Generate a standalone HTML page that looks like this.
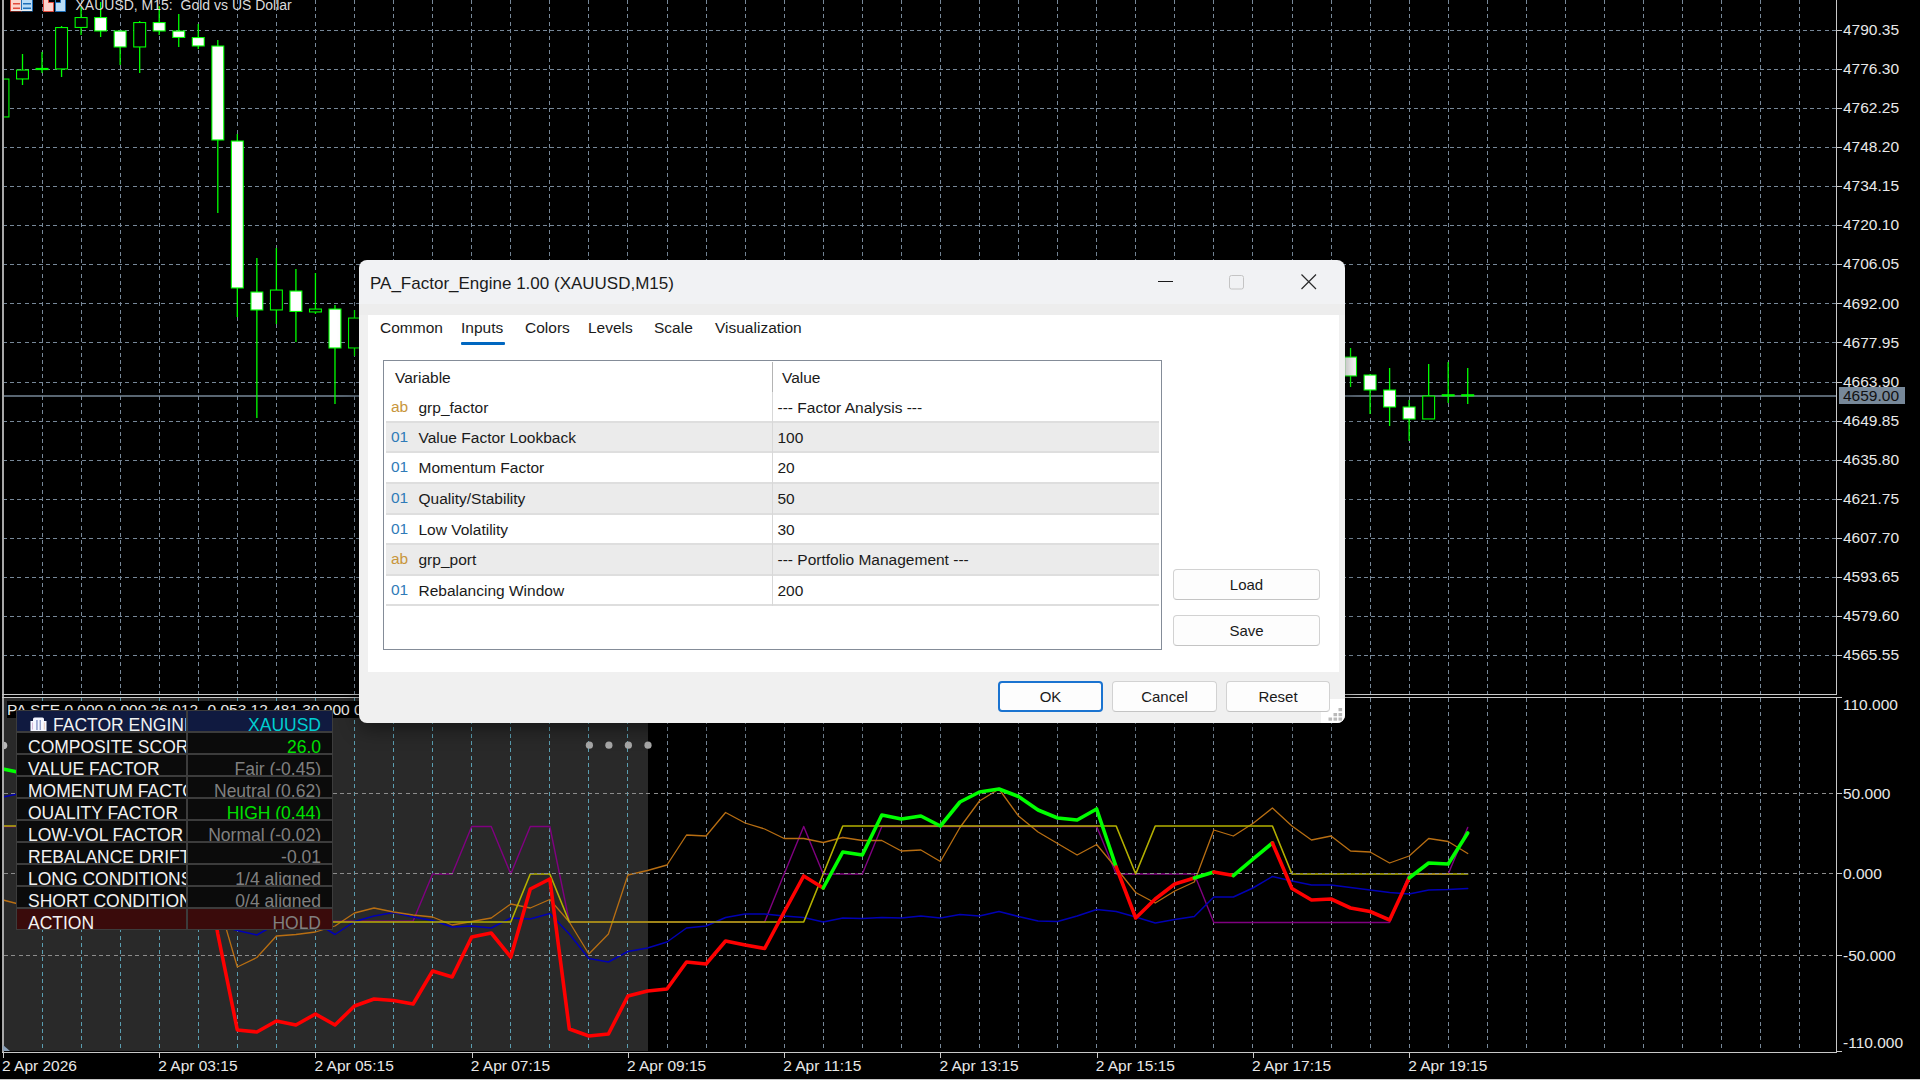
<!DOCTYPE html><html><head><meta charset="utf-8"><style>
*{margin:0;padding:0;box-sizing:border-box}
html,body{width:1920px;height:1080px;overflow:hidden;background:#000}
body{position:relative;font-family:"Liberation Sans",sans-serif}
.ax{position:absolute;color:#e8e8e8;font-size:15.5px;line-height:18px;white-space:nowrap}
.cell{position:absolute;height:22px;border:1px solid #3c3c3c;overflow:hidden}
.lab{position:absolute;top:3.8px;color:#f2f2f2;font-size:17.5px;line-height:20px;white-space:nowrap}
.val{position:absolute;right:11px;top:3.8px;font-size:17.5px;line-height:20px;white-space:nowrap}
#dlg{position:absolute;left:359px;top:260px;width:986px;height:463px;background:#f0f0f0;border-radius:8px;box-shadow:0 6px 20px rgba(0,0,0,0.45);overflow:hidden}
#dlg .title{position:absolute;left:11px;top:14px;font-size:17px;color:#1b1b1b;white-space:nowrap}
#dlg{background:linear-gradient(#f1f2f4 0,#f1f2f4 44px,#ededed 44px,#ededed 55px,#f0f0f0 55px)}
.client{position:absolute;left:9px;top:55px;width:971px;height:357px;background:#fff}
.tab{position:absolute;top:4px;font-size:15.5px;color:#1a1a1a;white-space:nowrap}
.tbl{position:absolute;left:15px;top:45px;width:779px;height:290px;border:1px solid #848c98;background:#fff;overflow:hidden}
.hdr{position:absolute;top:8px;font-size:15.5px;color:#1a1a1a}
.row{position:absolute;left:2px;width:773px;height:30.5px;border-top:2px solid #dedede}
.row.last{border-bottom:2px solid #dedede;height:32px}
.row .ic{position:absolute;left:5px;top:5px;font-size:15.5px}
.row .nm{position:absolute;left:32.5px;top:6px;font-size:15.5px;color:#1a1a1a;white-space:nowrap}
.row .vl{position:absolute;left:391.5px;top:6px;font-size:15.5px;color:#1a1a1a;white-space:nowrap}
.btn{position:absolute;width:146px;height:31px;border:1px solid #d2d2d2;border-bottom-color:#c4c4c4;border-radius:4px;background:#fdfdfd;font-size:15px;color:#1a1a1a;text-align:center;line-height:29px}
#dlg>.btn{width:104px;z-index:2}
.btn.ok{border:2px solid #1a73d0;line-height:27px}
</style></head><body>
<svg width="1920" height="1080" viewBox="0 0 1920 1080" style="position:absolute;left:0;top:0">
<rect x="0" y="0" width="1920" height="1080" fill="#000"/>
<rect x="4" y="698" width="644" height="353" fill="#292929"/>
<g stroke="#778899" stroke-width="1" stroke-dasharray="4 3.2" shape-rendering="crispEdges">
<line x1="42.5" y1="0" x2="42.5" y2="694"/>
<line x1="81.5" y1="0" x2="81.5" y2="694"/>
<line x1="120.5" y1="0" x2="120.5" y2="694"/>
<line x1="159.5" y1="0" x2="159.5" y2="694"/>
<line x1="198.5" y1="0" x2="198.5" y2="694"/>
<line x1="237.5" y1="0" x2="237.5" y2="694"/>
<line x1="276.5" y1="0" x2="276.5" y2="694"/>
<line x1="315.5" y1="0" x2="315.5" y2="694"/>
<line x1="354.5" y1="0" x2="354.5" y2="694"/>
<line x1="393.5" y1="0" x2="393.5" y2="694"/>
<line x1="432.5" y1="0" x2="432.5" y2="694"/>
<line x1="471.5" y1="0" x2="471.5" y2="694"/>
<line x1="510.5" y1="0" x2="510.5" y2="694"/>
<line x1="549.5" y1="0" x2="549.5" y2="694"/>
<line x1="588.5" y1="0" x2="588.5" y2="694"/>
<line x1="627.5" y1="0" x2="627.5" y2="694"/>
<line x1="667.5" y1="0" x2="667.5" y2="694"/>
<line x1="706.5" y1="0" x2="706.5" y2="694"/>
<line x1="745.5" y1="0" x2="745.5" y2="694"/>
<line x1="784.5" y1="0" x2="784.5" y2="694"/>
<line x1="823.5" y1="0" x2="823.5" y2="694"/>
<line x1="862.5" y1="0" x2="862.5" y2="694"/>
<line x1="901.5" y1="0" x2="901.5" y2="694"/>
<line x1="940.5" y1="0" x2="940.5" y2="694"/>
<line x1="979.5" y1="0" x2="979.5" y2="694"/>
<line x1="1018.5" y1="0" x2="1018.5" y2="694"/>
<line x1="1057.5" y1="0" x2="1057.5" y2="694"/>
<line x1="1096.5" y1="0" x2="1096.5" y2="694"/>
<line x1="1135.5" y1="0" x2="1135.5" y2="694"/>
<line x1="1174.5" y1="0" x2="1174.5" y2="694"/>
<line x1="1213.5" y1="0" x2="1213.5" y2="694"/>
<line x1="1252.5" y1="0" x2="1252.5" y2="694"/>
<line x1="1292.5" y1="0" x2="1292.5" y2="694"/>
<line x1="1331.5" y1="0" x2="1331.5" y2="694"/>
<line x1="1370.5" y1="0" x2="1370.5" y2="694"/>
<line x1="1409.5" y1="0" x2="1409.5" y2="694"/>
<line x1="1448.5" y1="0" x2="1448.5" y2="694"/>
<line x1="1487.5" y1="0" x2="1487.5" y2="694"/>
<line x1="1526.5" y1="0" x2="1526.5" y2="694"/>
<line x1="1565.5" y1="0" x2="1565.5" y2="694"/>
<line x1="1604.5" y1="0" x2="1604.5" y2="694"/>
<line x1="1643.5" y1="0" x2="1643.5" y2="694"/>
<line x1="1682.5" y1="0" x2="1682.5" y2="694"/>
<line x1="1721.5" y1="0" x2="1721.5" y2="694"/>
<line x1="1760.5" y1="0" x2="1760.5" y2="694"/>
<line x1="1799.5" y1="0" x2="1799.5" y2="694"/>
<line x1="3" y1="30.5" x2="1836" y2="30.5"/>
<line x1="3" y1="69.5" x2="1836" y2="69.5"/>
<line x1="3" y1="108.5" x2="1836" y2="108.5"/>
<line x1="3" y1="147.5" x2="1836" y2="147.5"/>
<line x1="3" y1="186.5" x2="1836" y2="186.5"/>
<line x1="3" y1="225.5" x2="1836" y2="225.5"/>
<line x1="3" y1="264.5" x2="1836" y2="264.5"/>
<line x1="3" y1="303.5" x2="1836" y2="303.5"/>
<line x1="3" y1="342.5" x2="1836" y2="342.5"/>
<line x1="3" y1="382.5" x2="1836" y2="382.5"/>
<line x1="3" y1="421.5" x2="1836" y2="421.5"/>
<line x1="3" y1="460.5" x2="1836" y2="460.5"/>
<line x1="3" y1="499.5" x2="1836" y2="499.5"/>
<line x1="3" y1="538.5" x2="1836" y2="538.5"/>
<line x1="3" y1="577.5" x2="1836" y2="577.5"/>
<line x1="3" y1="616.5" x2="1836" y2="616.5"/>
<line x1="3" y1="655.5" x2="1836" y2="655.5"/>
</g>
<g stroke-width="1" stroke-dasharray="4 3.2" shape-rendering="crispEdges">
<line x1="42.5" y1="698" x2="42.5" y2="1051" stroke="#5a9db0"/>
<line x1="81.5" y1="698" x2="81.5" y2="1051" stroke="#5a9db0"/>
<line x1="120.5" y1="698" x2="120.5" y2="1051" stroke="#5a9db0"/>
<line x1="159.5" y1="698" x2="159.5" y2="1051" stroke="#5a9db0"/>
<line x1="198.5" y1="698" x2="198.5" y2="1051" stroke="#5a9db0"/>
<line x1="237.5" y1="698" x2="237.5" y2="1051" stroke="#5a9db0"/>
<line x1="276.5" y1="698" x2="276.5" y2="1051" stroke="#5a9db0"/>
<line x1="315.5" y1="698" x2="315.5" y2="1051" stroke="#5a9db0"/>
<line x1="354.5" y1="698" x2="354.5" y2="1051" stroke="#5a9db0"/>
<line x1="393.5" y1="698" x2="393.5" y2="1051" stroke="#5a9db0"/>
<line x1="432.5" y1="698" x2="432.5" y2="1051" stroke="#5a9db0"/>
<line x1="471.5" y1="698" x2="471.5" y2="1051" stroke="#5a9db0"/>
<line x1="510.5" y1="698" x2="510.5" y2="1051" stroke="#5a9db0"/>
<line x1="549.5" y1="698" x2="549.5" y2="1051" stroke="#5a9db0"/>
<line x1="588.5" y1="698" x2="588.5" y2="1051" stroke="#5a9db0"/>
<line x1="627.5" y1="698" x2="627.5" y2="1051" stroke="#5a9db0"/>
<line x1="667.5" y1="698" x2="667.5" y2="1051" stroke="#778899"/>
<line x1="706.5" y1="698" x2="706.5" y2="1051" stroke="#778899"/>
<line x1="745.5" y1="698" x2="745.5" y2="1051" stroke="#778899"/>
<line x1="784.5" y1="698" x2="784.5" y2="1051" stroke="#778899"/>
<line x1="823.5" y1="698" x2="823.5" y2="1051" stroke="#778899"/>
<line x1="862.5" y1="698" x2="862.5" y2="1051" stroke="#778899"/>
<line x1="901.5" y1="698" x2="901.5" y2="1051" stroke="#778899"/>
<line x1="940.5" y1="698" x2="940.5" y2="1051" stroke="#778899"/>
<line x1="979.5" y1="698" x2="979.5" y2="1051" stroke="#778899"/>
<line x1="1018.5" y1="698" x2="1018.5" y2="1051" stroke="#778899"/>
<line x1="1057.5" y1="698" x2="1057.5" y2="1051" stroke="#778899"/>
<line x1="1096.5" y1="698" x2="1096.5" y2="1051" stroke="#778899"/>
<line x1="1135.5" y1="698" x2="1135.5" y2="1051" stroke="#778899"/>
<line x1="1174.5" y1="698" x2="1174.5" y2="1051" stroke="#778899"/>
<line x1="1213.5" y1="698" x2="1213.5" y2="1051" stroke="#778899"/>
<line x1="1252.5" y1="698" x2="1252.5" y2="1051" stroke="#778899"/>
<line x1="1292.5" y1="698" x2="1292.5" y2="1051" stroke="#778899"/>
<line x1="1331.5" y1="698" x2="1331.5" y2="1051" stroke="#778899"/>
<line x1="1370.5" y1="698" x2="1370.5" y2="1051" stroke="#778899"/>
<line x1="1409.5" y1="698" x2="1409.5" y2="1051" stroke="#778899"/>
<line x1="1448.5" y1="698" x2="1448.5" y2="1051" stroke="#778899"/>
<line x1="1487.5" y1="698" x2="1487.5" y2="1051" stroke="#778899"/>
<line x1="1526.5" y1="698" x2="1526.5" y2="1051" stroke="#778899"/>
<line x1="1565.5" y1="698" x2="1565.5" y2="1051" stroke="#778899"/>
<line x1="1604.5" y1="698" x2="1604.5" y2="1051" stroke="#778899"/>
<line x1="1643.5" y1="698" x2="1643.5" y2="1051" stroke="#778899"/>
<line x1="1682.5" y1="698" x2="1682.5" y2="1051" stroke="#778899"/>
<line x1="1721.5" y1="698" x2="1721.5" y2="1051" stroke="#778899"/>
<line x1="1760.5" y1="698" x2="1760.5" y2="1051" stroke="#778899"/>
<line x1="1799.5" y1="698" x2="1799.5" y2="1051" stroke="#778899"/>
</g>
<line x1="3" y1="396" x2="1836" y2="396" stroke="#778899" stroke-width="1.3"/>
<g>
<rect x="2.32" y="79" width="1.3" height="38" fill="#00ff00"/>
<rect x="-3.53" y="78.5" width="13" height="39" fill="#00ff00"/>
<rect x="-2.43" y="79.6" width="10.8" height="36.8" fill="#000000"/>
<rect x="21.85" y="54" width="1.3" height="31" fill="#00ff00"/>
<rect x="16" y="69.5" width="13" height="10" fill="#00ff00"/>
<rect x="17.1" y="70.6" width="10.8" height="7.8" fill="#000000"/>
<rect x="41.38" y="52" width="1.3" height="21" fill="#00ff00"/>
<rect x="35.53" y="67.9" width="13" height="2.2" fill="#00ff00"/>
<rect x="60.91" y="26" width="1.3" height="51" fill="#00ff00"/>
<rect x="55.06" y="27" width="13" height="42.5" fill="#00ff00"/>
<rect x="56.16" y="28.1" width="10.8" height="40.3" fill="#000000"/>
<rect x="80.44" y="7" width="1.3" height="28" fill="#00ff00"/>
<rect x="74.59" y="17" width="13" height="11" fill="#00ff00"/>
<rect x="75.69" y="18.1" width="10.8" height="8.8" fill="#000000"/>
<rect x="99.97" y="2" width="1.3" height="35" fill="#00ff00"/>
<rect x="94.12" y="17" width="13" height="14.5" fill="#00ff00"/>
<rect x="95.22" y="18.1" width="10.8" height="12.3" fill="#ffffff"/>
<rect x="119.5" y="31" width="1.3" height="34" fill="#00ff00"/>
<rect x="113.65" y="30.5" width="13" height="17" fill="#00ff00"/>
<rect x="114.75" y="31.6" width="10.8" height="14.8" fill="#ffffff"/>
<rect x="139.03" y="21" width="1.3" height="52" fill="#00ff00"/>
<rect x="133.18" y="22" width="13" height="25.5" fill="#00ff00"/>
<rect x="134.28" y="23.1" width="10.8" height="23.3" fill="#000000"/>
<rect x="158.56" y="6" width="1.3" height="29" fill="#00ff00"/>
<rect x="152.71" y="22" width="13" height="9.5" fill="#00ff00"/>
<rect x="153.81" y="23.1" width="10.8" height="7.3" fill="#ffffff"/>
<rect x="178.09" y="14" width="1.3" height="33" fill="#00ff00"/>
<rect x="172.24" y="30.5" width="13" height="7.5" fill="#00ff00"/>
<rect x="173.34" y="31.6" width="10.8" height="5.3" fill="#ffffff"/>
<rect x="197.62" y="24" width="1.3" height="25" fill="#00ff00"/>
<rect x="191.77" y="37" width="13" height="9.5" fill="#00ff00"/>
<rect x="192.87" y="38.1" width="10.8" height="7.3" fill="#ffffff"/>
<rect x="217.15" y="40" width="1.3" height="173" fill="#00ff00"/>
<rect x="211.3" y="45.5" width="13" height="95" fill="#00ff00"/>
<rect x="212.4" y="46.6" width="10.8" height="92.8" fill="#ffffff"/>
<rect x="236.68" y="134" width="1.3" height="183" fill="#00ff00"/>
<rect x="230.83" y="140.5" width="13" height="148" fill="#00ff00"/>
<rect x="231.93" y="141.6" width="10.8" height="145.8" fill="#ffffff"/>
<rect x="256.21" y="258" width="1.3" height="160" fill="#00ff00"/>
<rect x="250.36" y="291.5" width="13" height="19" fill="#00ff00"/>
<rect x="251.46" y="292.6" width="10.8" height="16.8" fill="#ffffff"/>
<rect x="275.74" y="248" width="1.3" height="76" fill="#00ff00"/>
<rect x="269.89" y="289.5" width="13" height="21" fill="#00ff00"/>
<rect x="270.99" y="290.6" width="10.8" height="18.8" fill="#000000"/>
<rect x="295.27" y="269" width="1.3" height="73" fill="#00ff00"/>
<rect x="289.42" y="290.5" width="13" height="21.5" fill="#00ff00"/>
<rect x="290.52" y="291.6" width="10.8" height="19.3" fill="#ffffff"/>
<rect x="314.8" y="273" width="1.3" height="41" fill="#00ff00"/>
<rect x="308.95" y="308.5" width="13" height="4" fill="#00ff00"/>
<rect x="310.05" y="309.6" width="10.8" height="1.8" fill="#000000"/>
<rect x="334.33" y="305" width="1.3" height="99" fill="#00ff00"/>
<rect x="328.48" y="308.5" width="13" height="40" fill="#00ff00"/>
<rect x="329.58" y="309.6" width="10.8" height="37.8" fill="#ffffff"/>
<rect x="353.86" y="310" width="1.3" height="46" fill="#00ff00"/>
<rect x="348.01" y="317.5" width="13" height="31" fill="#00ff00"/>
<rect x="349.11" y="318.6" width="10.8" height="28.8" fill="#000000"/>
<rect x="1349.89" y="348" width="1.3" height="39" fill="#00ff00"/>
<rect x="1344.04" y="356.5" width="13" height="20" fill="#00ff00"/>
<rect x="1345.14" y="357.6" width="10.8" height="17.8" fill="#ffffff"/>
<rect x="1369.42" y="374" width="1.3" height="40" fill="#00ff00"/>
<rect x="1363.57" y="374.5" width="13" height="16" fill="#00ff00"/>
<rect x="1364.67" y="375.6" width="10.8" height="13.8" fill="#ffffff"/>
<rect x="1388.95" y="368" width="1.3" height="58" fill="#00ff00"/>
<rect x="1383.1" y="389.5" width="13" height="18" fill="#00ff00"/>
<rect x="1384.2" y="390.6" width="10.8" height="15.8" fill="#ffffff"/>
<rect x="1408.48" y="400" width="1.3" height="41" fill="#00ff00"/>
<rect x="1402.63" y="406.5" width="13" height="13" fill="#00ff00"/>
<rect x="1403.73" y="407.6" width="10.8" height="10.8" fill="#ffffff"/>
<rect x="1428.01" y="364" width="1.3" height="55" fill="#00ff00"/>
<rect x="1422.16" y="395.5" width="13" height="24" fill="#00ff00"/>
<rect x="1423.26" y="396.6" width="10.8" height="21.8" fill="#000000"/>
<rect x="1447.54" y="362" width="1.3" height="41" fill="#00ff00"/>
<rect x="1441.69" y="394.2" width="13" height="2.2" fill="#00ff00"/>
<rect x="1467.07" y="368" width="1.3" height="36" fill="#00ff00"/>
<rect x="1461.22" y="394.2" width="13" height="2.2" fill="#00ff00"/>
</g>
<g fill="none" stroke-linejoin="round" stroke-linecap="round">
<path d="M2.97 826.5 L120.15 826.5 L139.68 922 L413.1 921 L432.63 874 L452.16 874 L471.69 826.5 L491.22 826.5 L510.75 874 L530.28 826.5 L549.81 826.5 L569.34 922 L764.64 922 L784.17 874 L803.7 826.5 L823.23 874 L842.76 874 L862.29 874 L881.82 826.5 L1096.65 826.5 L1116.18 874 L1194.3 874 L1213.83 922.5 L1389.6 922.5 L1409.13 874 L1428.66 874 L1448.19 874 L1467.72 827.5" stroke="#800080" stroke-width="1.4"/>
<path d="M2.97 797 L22.5 793 L42.03 800 L61.56 810 L81.09 820 L100.62 830 L120.15 840 L139.68 850 L159.21 870 L178.74 890 L198.27 910 L217.8 925 L237.33 930.5 L256.86 935 L276.39 924 L295.92 920 L315.45 922 L334.98 934.5 L354.51 921.5 L374.04 916 L393.57 912.5 L413.1 917 L432.63 920.5 L452.16 927 L471.69 926 L491.22 928 L510.75 918 L530.28 919 L549.81 913.5 L569.34 934 L588.87 958.5 L608.4 962 L627.93 951.5 L647.46 948 L666.99 942 L686.52 928 L706.05 926 L725.58 917.5 L745.11 914 L764.64 914 L784.17 916 L803.7 917.5 L823.23 922 L842.76 918 L862.29 918.5 L881.82 917.5 L901.35 918 L920.88 916 L940.41 918 L959.94 914.5 L979.47 916 L999 911.5 L1018.53 916.5 L1038.06 921 L1057.59 921.5 L1077.12 916 L1096.65 909.5 L1116.18 911.5 L1135.71 917 L1155.24 923 L1174.77 919.5 L1194.3 916.5 L1213.83 897 L1233.36 897 L1252.89 888 L1272.42 876.5 L1291.95 881 L1311.48 885 L1331.01 885 L1350.54 887.5 L1370.07 890 L1389.6 892.5 L1409.13 894 L1428.66 890 L1448.19 889.5 L1467.72 888.5" stroke="#0000b4" stroke-width="1.5"/>
<path d="M2.97 900 L22.5 905 L42.03 880 L61.56 860 L81.09 850 L100.62 860 L120.15 870 L139.68 860 L159.21 870 L178.74 880 L198.27 890 L217.8 900 L237.33 967 L256.86 957.5 L276.39 936 L295.92 934.5 L315.45 932 L334.98 926 L354.51 913 L374.04 908 L393.57 912 L413.1 915 L432.63 917 L452.16 925 L471.69 921.5 L491.22 918 L510.75 904 L530.28 908 L549.81 899.5 L569.34 922 L588.87 954 L608.4 934 L627.93 875 L647.46 870.5 L666.99 865 L686.52 835 L706.05 836 L725.58 812.5 L745.11 823 L764.64 829 L784.17 838.5 L803.7 838.5 L823.23 842.5 L842.76 837.5 L862.29 840.5 L881.82 840.5 L901.35 851 L920.88 850 L940.41 861.5 L959.94 827.5 L979.47 801 L999 789 L1018.53 816 L1038.06 832 L1057.59 843.5 L1077.12 855 L1096.65 844.5 L1116.18 868 L1135.71 892.5 L1155.24 903 L1174.77 891 L1194.3 882 L1213.83 830 L1233.36 836 L1252.89 823.5 L1272.42 808 L1291.95 826 L1311.48 840 L1331.01 836 L1350.54 851 L1370.07 852 L1389.6 863 L1409.13 856 L1428.66 838.5 L1448.19 841.5 L1467.72 853.5" stroke="#b86e12" stroke-width="1.3"/>
<path d="M2.97 826 L120.15 826 L139.68 922 L159.21 922 L178.74 922 L198.27 922 L217.8 922 L237.33 922 L256.86 922 L276.39 922 L295.92 922 L315.45 922 L334.98 922 L354.51 922 L374.04 922 L393.57 922 L413.1 922 L432.63 922 L452.16 922 L471.69 922 L491.22 922 L510.75 922 L530.28 874 L549.81 874 L569.34 922 L803.7 922 L823.23 874 L842.76 826 L1116.18 826 L1135.71 874 L1155.24 826 L1272.42 826 L1291.95 874 L1467.72 874" stroke="#b4b000" stroke-width="1.6"/>
<line x1="4" y1="793.5" x2="1836" y2="793.5" stroke="#8c8c8c" stroke-width="1" stroke-dasharray="4 3.3" stroke-linecap="butt" shape-rendering="crispEdges"/>
<line x1="4" y1="873.5" x2="1836" y2="873.5" stroke="#8c8c8c" stroke-width="1" stroke-dasharray="4 3.3" stroke-linecap="butt" shape-rendering="crispEdges"/>
<line x1="4" y1="955.5" x2="1836" y2="955.5" stroke="#8c8c8c" stroke-width="1" stroke-dasharray="4 3.3" stroke-linecap="butt" shape-rendering="crispEdges"/>
<path d="M2.97 769 L22.5 773" stroke="#00ff00" stroke-width="3.6"/>
<path d="M22.5 773 L42.03 780 L61.56 800 L81.09 820 L100.62 840 L120.15 860 L139.68 880 L159.21 790 L178.74 800 L198.27 820 L217.8 934 L237.33 1030 L256.86 1032 L276.39 1021 L295.92 1025 L315.45 1014 L334.98 1025 L354.51 1006 L374.04 999 L393.57 1000.5 L413.1 1004 L432.63 971 L452.16 977 L471.69 937 L491.22 933 L510.75 957 L530.28 889 L549.81 879 L569.34 1029 L588.87 1036 L608.4 1034 L627.93 996 L647.46 991 L666.99 989 L686.52 962 L706.05 964 L725.58 941 L745.11 945 L764.64 948.5 L784.17 912 L803.7 876 L823.23 888" stroke="#ff0000" stroke-width="3.6"/>
<path d="M823.23 888 L842.76 852 L862.29 855 L881.82 815 L901.35 819 L920.88 816 L940.41 826 L959.94 802 L979.47 792 L999 789 L1018.53 796.5 L1038.06 810 L1057.59 818 L1077.12 820 L1096.65 809 L1116.18 867" stroke="#00ff00" stroke-width="3.6"/>
<path d="M1116.18 867 L1135.71 918 L1155.24 899 L1174.77 884 L1194.3 878" stroke="#ff0000" stroke-width="3.6"/>
<path d="M1194.3 878 L1213.83 872" stroke="#00ff00" stroke-width="3.6"/>
<path d="M1213.83 872 L1233.36 875.5" stroke="#ff0000" stroke-width="3.6"/>
<path d="M1233.36 875.5 L1252.89 859 L1272.42 843" stroke="#00ff00" stroke-width="3.6"/>
<path d="M1272.42 843 L1291.95 888.5 L1311.48 900 L1331.01 899 L1350.54 908 L1370.07 911.5 L1389.6 920 L1409.13 878" stroke="#ff0000" stroke-width="3.6"/>
<path d="M1409.13 878 L1428.66 863 L1448.19 864 L1467.72 833" stroke="#00ff00" stroke-width="3.6"/>
</g>
<circle cx="589.4" cy="745.2" r="3.6" fill="#a8a8a8"/>
<circle cx="608.9" cy="745.2" r="3.6" fill="#a8a8a8"/>
<circle cx="628.4" cy="745.2" r="3.6" fill="#a8a8a8"/>
<circle cx="648" cy="745.2" r="3.6" fill="#a8a8a8"/>
<circle cx="3.5" cy="745.5" r="3.8" fill="#b8b8b8"/>
<g stroke="#c8c8c8" stroke-width="1" shape-rendering="crispEdges">
<rect x="0" y="0" width="2" height="1080" fill="#000" stroke="none"/>
<rect x="2" y="0" width="2" height="1053" fill="#a8a8a8" stroke="none"/>
<line x1="1836.5" y1="0" x2="1836.5" y2="695"/>
<line x1="1836.5" y1="697" x2="1836.5" y2="1052"/>
<line x1="2" y1="694.5" x2="1837" y2="694.5"/>
<line x1="2" y1="697.5" x2="1837" y2="697.5"/>
<line x1="2" y1="1052.5" x2="1837" y2="1052.5"/>
<line x1="0" y1="1079.5" x2="1920" y2="1079.5"/>
<line x1="1837" y1="30.5" x2="1842" y2="30.5"/>
<line x1="1837" y1="69.5" x2="1842" y2="69.5"/>
<line x1="1837" y1="108.5" x2="1842" y2="108.5"/>
<line x1="1837" y1="147.5" x2="1842" y2="147.5"/>
<line x1="1837" y1="186.5" x2="1842" y2="186.5"/>
<line x1="1837" y1="225.5" x2="1842" y2="225.5"/>
<line x1="1837" y1="264.5" x2="1842" y2="264.5"/>
<line x1="1837" y1="303.5" x2="1842" y2="303.5"/>
<line x1="1837" y1="342.5" x2="1842" y2="342.5"/>
<line x1="1837" y1="382.5" x2="1842" y2="382.5"/>
<line x1="1837" y1="421.5" x2="1842" y2="421.5"/>
<line x1="1837" y1="460.5" x2="1842" y2="460.5"/>
<line x1="1837" y1="499.5" x2="1842" y2="499.5"/>
<line x1="1837" y1="538.5" x2="1842" y2="538.5"/>
<line x1="1837" y1="577.5" x2="1842" y2="577.5"/>
<line x1="1837" y1="616.5" x2="1842" y2="616.5"/>
<line x1="1837" y1="655.5" x2="1842" y2="655.5"/>
<line x1="1837" y1="697.5" x2="1842" y2="697.5"/>
<line x1="1837" y1="793.5" x2="1842" y2="793.5"/>
<line x1="1837" y1="873.5" x2="1842" y2="873.5"/>
<line x1="1837" y1="955.5" x2="1842" y2="955.5"/>
<line x1="1837" y1="1051.5" x2="1842" y2="1051.5"/>
<line x1="3.5" y1="1053" x2="3.5" y2="1058"/>
<line x1="159.5" y1="1053" x2="159.5" y2="1058"/>
<line x1="315.5" y1="1053" x2="315.5" y2="1058"/>
<line x1="472.5" y1="1053" x2="472.5" y2="1058"/>
<line x1="628.5" y1="1053" x2="628.5" y2="1058"/>
<line x1="784.5" y1="1053" x2="784.5" y2="1058"/>
<line x1="940.5" y1="1053" x2="940.5" y2="1058"/>
<line x1="1097.5" y1="1053" x2="1097.5" y2="1058"/>
<line x1="1253.5" y1="1053" x2="1253.5" y2="1058"/>
<line x1="1409.5" y1="1053" x2="1409.5" y2="1058"/>
</g>
<path d="M3 1045 L10 1051 L3 1051 Z" fill="#8aa0b8"/>
<rect x="1839" y="387" width="66" height="17" fill="#778899"/>
</svg>
<div class="ax" style="left:1843px;top:21.1px">4790.35</div>
<div class="ax" style="left:1843px;top:60.16px">4776.30</div>
<div class="ax" style="left:1843px;top:99.22px">4762.25</div>
<div class="ax" style="left:1843px;top:138.28px">4748.20</div>
<div class="ax" style="left:1843px;top:177.34px">4734.15</div>
<div class="ax" style="left:1843px;top:216.4px">4720.10</div>
<div class="ax" style="left:1843px;top:255.46px">4706.05</div>
<div class="ax" style="left:1843px;top:294.52px">4692.00</div>
<div class="ax" style="left:1843px;top:333.58px">4677.95</div>
<div class="ax" style="left:1843px;top:372.64px">4663.90</div>
<div class="ax" style="left:1843px;top:411.7px">4649.85</div>
<div class="ax" style="left:1843px;top:450.76px">4635.80</div>
<div class="ax" style="left:1843px;top:489.82px">4621.75</div>
<div class="ax" style="left:1843px;top:528.88px">4607.70</div>
<div class="ax" style="left:1843px;top:567.94px">4593.65</div>
<div class="ax" style="left:1843px;top:607px">4579.60</div>
<div class="ax" style="left:1843px;top:646.06px">4565.55</div>
<div class="ax" style="left:1843px;top:387px;color:#111">4659.00</div>
<div class="ax" style="left:1843px;top:696px">110.000</div>
<div class="ax" style="left:1843px;top:784.5px">50.000</div>
<div class="ax" style="left:1843px;top:864.7px">0.000</div>
<div class="ax" style="left:1843px;top:946.5px">-50.000</div>
<div class="ax" style="left:1843px;top:1034px">-110.000</div>
<div class="ax" style="left:2px;top:1057px">2 Apr 2026</div>
<div class="ax" style="left:158.24px;top:1057px">2 Apr 03:15</div>
<div class="ax" style="left:314.48px;top:1057px">2 Apr 05:15</div>
<div class="ax" style="left:470.72px;top:1057px">2 Apr 07:15</div>
<div class="ax" style="left:626.96px;top:1057px">2 Apr 09:15</div>
<div class="ax" style="left:783.2px;top:1057px">2 Apr 11:15</div>
<div class="ax" style="left:939.44px;top:1057px">2 Apr 13:15</div>
<div class="ax" style="left:1095.68px;top:1057px">2 Apr 15:15</div>
<div class="ax" style="left:1251.92px;top:1057px">2 Apr 17:15</div>
<div class="ax" style="left:1408.16px;top:1057px">2 Apr 19:15</div>
<div class="ax" style="left:75.5px;top:-4px;font-size:14px;color:#dcdcdc">XAUUSD, M15:&nbsp; Gold vs US Dollar</div>
<div style="position:absolute;left:7px;top:701px;height:17px;width:353px;background:#000"></div>
<div class="ax" style="left:7px;top:701px;white-space:nowrap">PA SFE 0.000 0.000 26.012 -0.053 12.481 30.000 0.000</div>
<svg style="position:absolute;left:10px;top:0" width="60" height="13" viewBox="0 0 60 13">
<rect x="0.5" y="-3" width="11" height="14" fill="#fbd4cc" stroke="#e04a3c"/>
<rect x="11.5" y="-3" width="11" height="14" fill="#b9dcf6" stroke="#1f6fb8"/>
<line x1="1" y1="10.5" x2="22" y2="10.5" stroke="#f0f0f0" stroke-width="1"/>
<rect x="3" y="3" width="7" height="1.5" fill="#e04a3c"/><rect x="3" y="7.5" width="7" height="1.5" fill="#e04a3c"/>
<rect x="13" y="3" width="8" height="1.5" fill="#1f6fb8"/><rect x="13" y="7.5" width="8" height="1.5" fill="#1f6fb8"/>
<path d="M33.5 -3 V11.5 H43.5 V2.5 H38.5 V-3 Z" fill="#fbd4cc" stroke="#e04a3c"/>
<path d="M45.5 -3 V11.5 H55.5 V-3 H50.5 V2.5 H45.5 Z" fill="#b9dcf6" stroke="#1f6fb8"/>
</svg>
<div class="cell" style="left:16px;top:710px;width:171px;background:#101a40"><svg style="position:absolute;left:13px;top:6px" width="18" height="15" viewBox="0 0 18 15"><rect x="3" y="0.6" width="11" height="4.5" rx="1.6" fill="#f4f6ff"/><rect x="0.5" y="4" width="16" height="10" fill="#f4f6ff"/><rect x="6.3" y="3" width="1.3" height="10" fill="#7d8cc0"/><rect x="9.6" y="3" width="1.3" height="10" fill="#8a9ac8"/><rect x="2" y="5.5" width="1" height="7" fill="#d8b8d8"/><rect x="13.8" y="5.5" width="1" height="7" fill="#e8c8b8"/></svg><span class="lab" style="left:36px">FACTOR ENGINE</span></div>
<div class="cell" style="left:187px;top:710px;width:146px;background:#101a40"><span class="val" style="color:#00ced1">XAUUSD</span></div>
<div class="cell" style="left:16px;top:732px;width:171px;background:#0b0b0b"><span class="lab" style="left:11px">COMPOSITE SCORE</span></div>
<div class="cell" style="left:187px;top:732px;width:146px;background:#0b0b0b"><span class="val" style="color:#00e000">26.0</span></div>
<div class="cell" style="left:16px;top:754px;width:171px;background:#0b0b0b"><span class="lab" style="left:11px">VALUE FACTOR</span></div>
<div class="cell" style="left:187px;top:754px;width:146px;background:#0b0b0b"><span class="val" style="color:#808080">Fair (-0.45)</span></div>
<div class="cell" style="left:16px;top:776px;width:171px;background:#0b0b0b"><span class="lab" style="left:11px">MOMENTUM FACTOR</span></div>
<div class="cell" style="left:187px;top:776px;width:146px;background:#0b0b0b"><span class="val" style="color:#808080">Neutral (0.62)</span></div>
<div class="cell" style="left:16px;top:798px;width:171px;background:#0b0b0b"><span class="lab" style="left:11px">QUALITY FACTOR</span></div>
<div class="cell" style="left:187px;top:798px;width:146px;background:#0b0b0b"><span class="val" style="color:#00e000">HIGH (0.44)</span></div>
<div class="cell" style="left:16px;top:820px;width:171px;background:#0b0b0b"><span class="lab" style="left:11px">LOW-VOL FACTOR</span></div>
<div class="cell" style="left:187px;top:820px;width:146px;background:#0b0b0b"><span class="val" style="color:#808080">Normal (-0.02)</span></div>
<div class="cell" style="left:16px;top:842px;width:171px;background:#0b0b0b"><span class="lab" style="left:11px">REBALANCE DRIFT</span></div>
<div class="cell" style="left:187px;top:842px;width:146px;background:#0b0b0b"><span class="val" style="color:#808080">-0.01</span></div>
<div class="cell" style="left:16px;top:864px;width:171px;background:#0b0b0b"><span class="lab" style="left:11px">LONG CONDITIONS</span></div>
<div class="cell" style="left:187px;top:864px;width:146px;background:#0b0b0b"><span class="val" style="color:#808080">1/4 aligned</span></div>
<div class="cell" style="left:16px;top:886px;width:171px;background:#0b0b0b"><span class="lab" style="left:11px">SHORT CONDITIONS</span></div>
<div class="cell" style="left:187px;top:886px;width:146px;background:#0b0b0b"><span class="val" style="color:#808080">0/4 aligned</span></div>
<div class="cell" style="left:16px;top:908px;width:171px;background:#3a0b0b"><span class="lab" style="left:11px">ACTION</span></div>
<div class="cell" style="left:187px;top:908px;width:146px;background:#3a0b0b"><span class="val" style="color:#808080">HOLD</span></div>
<div id="dlg">
<div class="title">PA_Factor_Engine 1.00 (XAUUSD,M15)</div>
<svg style="position:absolute;left:790px;top:0px" width="190" height="36" viewBox="0 0 190 36">
<line x1="9" y1="21.5" x2="24" y2="21.5" stroke="#1a1a1a" stroke-width="1"/>
<rect x="80.5" y="15.5" width="14" height="13.5" rx="2" fill="none" stroke="#c4c4c4" stroke-width="1"/>
<path d="M152.5 14.5 L167 29 M167 14.5 L152.5 29" stroke="#2a2a2a" stroke-width="1.2"/>
</svg>
<div class="band"></div>
<div class="client">
<div class="tab" style="left:12px">Common</div>
<div class="tab" style="left:93px">Inputs</div>
<div class="tab" style="left:157px">Colors</div>
<div class="tab" style="left:220px">Levels</div>
<div class="tab" style="left:286px">Scale</div>
<div class="tab" style="left:347px">Visualization</div>
<div style="position:absolute;left:93px;top:27px;width:44px;height:3px;background:#0067c0;border-radius:1px"></div>
<div class="tbl">
<div class="hdr" style="left:11px">Variable</div><div class="hdr" style="left:398px">Value</div>
<div style="position:absolute;left:388px;top:1px;width:1px;height:30px;background:#b4b4b4"></div>
<div class="row" style="top:31.5px;background:#ffffff;border-top:none;"><span class="ic" style="color:#c8963c">ab</span><span class="nm">grp_factor</span><span class="vl">--- Factor Analysis ---</span></div>
<div class="row" style="top:59.8px;background:#ebebeb;"><span class="ic" style="color:#2f7bb8">01</span><span class="nm">Value Factor Lookback</span><span class="vl">100</span></div>
<div class="row" style="top:90.4px;background:#ffffff;"><span class="ic" style="color:#2f7bb8">01</span><span class="nm">Momentum Factor</span><span class="vl">20</span></div>
<div class="row" style="top:121px;background:#ebebeb;"><span class="ic" style="color:#2f7bb8">01</span><span class="nm">Quality/Stability</span><span class="vl">50</span></div>
<div class="row" style="top:151.6px;background:#ffffff;"><span class="ic" style="color:#2f7bb8">01</span><span class="nm">Low Volatility</span><span class="vl">30</span></div>
<div class="row" style="top:182.2px;background:#ebebeb;"><span class="ic" style="color:#c8963c">ab</span><span class="nm">grp_port</span><span class="vl">--- Portfolio Management ---</span></div>
<div class="row last" style="top:212.8px;background:#ffffff;"><span class="ic" style="color:#2f7bb8">01</span><span class="nm">Rebalancing Window</span><span class="vl">200</span></div>
<div style="position:absolute;left:388px;top:31px;width:1px;height:214px;background:#d8d8d8"></div>
</div>
<div class="btn" style="left:805px;top:254px;width:147px">Load</div>
<div class="btn" style="left:805px;top:300px;width:147px">Save</div>
</div>
<div class="btn ok" style="left:639px;top:421px;width:105px">OK</div>
<div class="btn" style="left:753px;top:421px;width:105px">Cancel</div>
<div class="btn" style="left:867px;top:421px">Reset</div>
<svg style="position:absolute;left:962px;top:439px" width="24" height="24" viewBox="0 0 24 24"><rect x="0" y="0" width="24" height="24" fill="#ffffff"/><g fill="#b9b9b9"><rect x="17.5" y="9" width="3.6" height="3.2"/><rect x="12.5" y="14" width="3.6" height="3.2"/><rect x="17.5" y="14" width="3.6" height="3.2"/><rect x="7.5" y="18.5" width="3.6" height="3.2"/><rect x="12.5" y="18.5" width="3.6" height="3.2"/><rect x="17.5" y="18.5" width="3.6" height="3.2"/></g></svg>
</div>
</body></html>
